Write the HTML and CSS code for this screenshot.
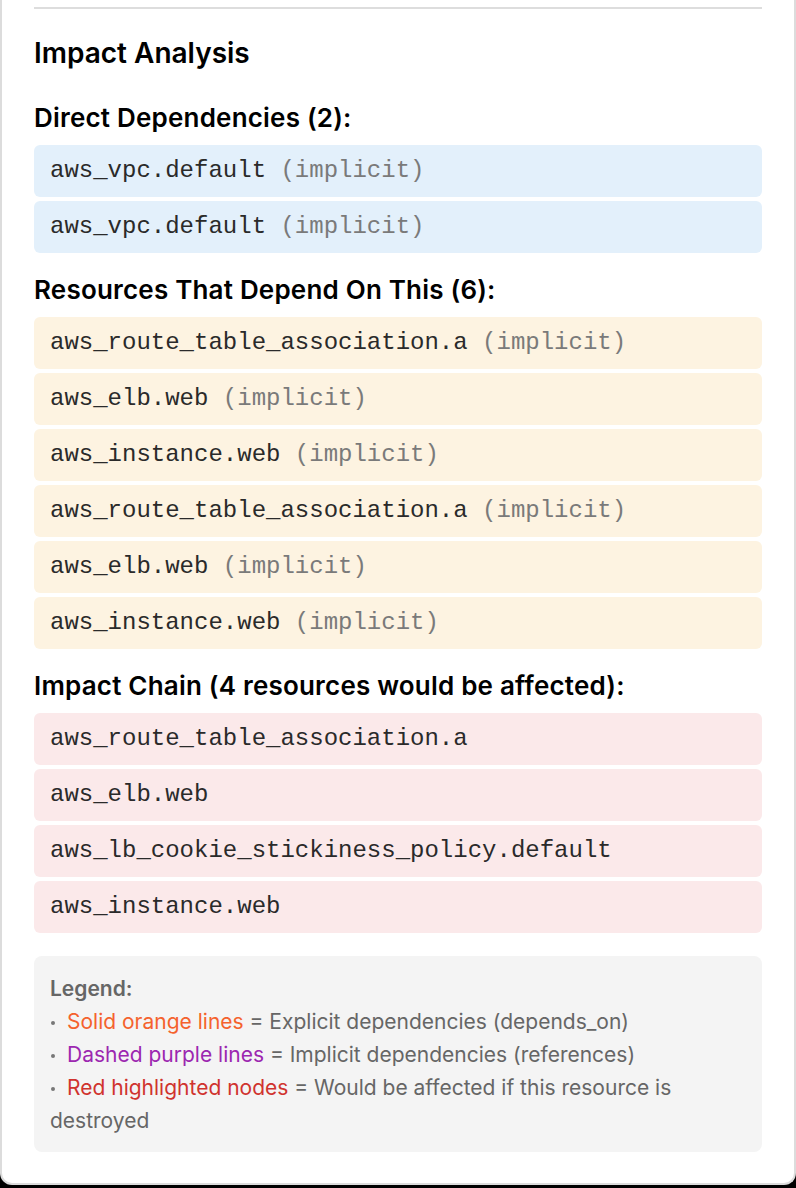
FILE: index.html
```html
<!DOCTYPE html>
<html>
<head>
<meta charset="utf-8">
<link rel="stylesheet" href="styles.css">
</head>
<body>
<div class="panel">
  <hr class="divider">
  <h3 class="title">Impact Analysis</h3>

  <h4 class="section-title">Direct Dependencies (2):</h4>
  <div class="list">
    <div class="item item-dep">aws_vpc.default <span class="kind">(implicit)</span></div>
    <div class="item item-dep">aws_vpc.default <span class="kind">(implicit)</span></div>
  </div>

  <h4 class="section-title">Resources That Depend On This (6):</h4>
  <div class="list">
    <div class="item item-rev">aws_route_table_association.a <span class="kind">(implicit)</span></div>
    <div class="item item-rev">aws_elb.web <span class="kind">(implicit)</span></div>
    <div class="item item-rev">aws_instance.web <span class="kind">(implicit)</span></div>
    <div class="item item-rev">aws_route_table_association.a <span class="kind">(implicit)</span></div>
    <div class="item item-rev">aws_elb.web <span class="kind">(implicit)</span></div>
    <div class="item item-rev">aws_instance.web <span class="kind">(implicit)</span></div>
  </div>

  <h4 class="section-title">Impact Chain (4 resources would be affected):</h4>
  <div class="list">
    <div class="item item-impact">aws_route_table_association.a</div>
    <div class="item item-impact">aws_elb.web</div>
    <div class="item item-impact">aws_lb_cookie_stickiness_policy.default</div>
    <div class="item item-impact">aws_instance.web</div>
  </div>

  <div class="legend">
    <div class="legend-title">Legend:</div>
    <div><span class="dot"></span><span class="c-orange">Solid orange lines</span> = Explicit dependencies (depends_on)</div>
    <div><span class="dot"></span><span class="c-purple">Dashed purple lines</span> = Implicit dependencies (references)</div>
    <div><span class="dot"></span><span class="c-red">Red highlighted nodes</span> = Would be affected if this resource is destroyed</div>
  </div>
</div>
</body>
</html>
```
FILE: styles.css
```css
html, body {
  margin: 0;
  padding: 0;
  background: #000;
}
body {
  font-family: Inter, "Noto Sans", "Liberation Sans", sans-serif;
  height: 1188px;
  overflow: hidden;
}
.panel {
  display: flex;
  flex-direction: column;
  background: #fff;
  border: 2px solid #dcdcdc;
  border-top: none;
  border-radius: 0 0 12px 12px;
  padding: 7px 32px 31px;
}
.divider {
  margin: 0;
  border: 0;
  height: 2px;
  background: #dddddd;
}
.title {
  margin: 27px 0 11px;
  font-size: 28px;
  line-height: 34px;
  font-weight: 600;
  color: #000;
}
.section-title {
  margin: 22px 0 12px;
  font-size: 26px;
  line-height: 30px;
  font-weight: 600;
  letter-spacing: 0.2px;
  color: #000;
}
.list {
  display: flex;
  flex-direction: column;
  gap: 4px;
}
.item {
  font-family: "Courier New", "Nimbus Mono PS", "FreeMono", "Liberation Mono", monospace;
  font-size: 24px;
  line-height: 28px;
  padding: 12px 16px;
  border-radius: 6px;
  color: #2a2a2a;
  white-space: pre;
}
.kind {
  color: #7a7a7a;
}
.item-dep { background: #e3f0fb; }
.item-rev { background: #fdf3e1; }
.item-impact { background: #fbe9ea; }
.legend {
  margin-top: 23px;
  background: #f4f4f4;
  border-radius: 8px;
  padding: 16px 16px 15px;
  font-size: 21px;
  line-height: 33px;
  color: #666;
}
.legend-title {
  font-weight: 600;
}
.dot {
  display: inline-block;
  width: 4px;
  height: 4px;
  border-radius: 50%;
  background: #777;
  margin: 0 12px 0 1px;
  vertical-align: middle;
}
.c-orange { color: #f4622d; }
.c-purple { color: #9c27b0; }
.c-red { color: #d0332e; }
```
